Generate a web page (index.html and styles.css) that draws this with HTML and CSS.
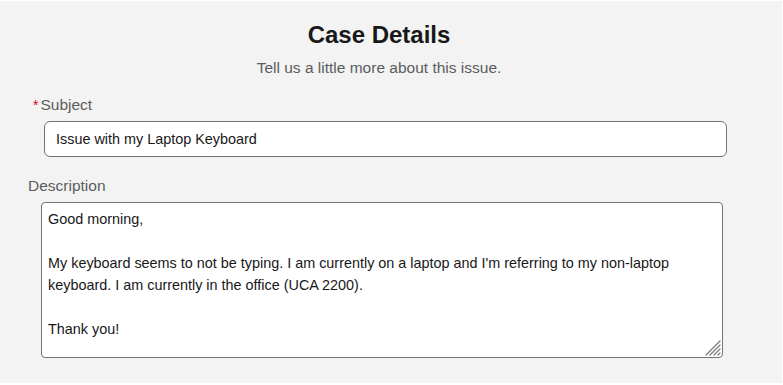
FILE: index.html
```html
<!DOCTYPE html>
<html lang="en">
<head>
  <meta charset="UTF-8">
  <title>Case Details</title>
  <link rel="stylesheet" href="styles.css">
</head>
<body>

<main class="panel">
  <header class="case-head">
    <h1 class="case-title">Case Details</h1>
    <p class="case-sub">Tell us a little more about this issue.</p>
  </header>

  <div class="field field-subject">
    <label class="field-label" for="subjectInput"><span class="req">*</span>Subject</label>
    <input class="subject-input" id="subjectInput" type="text" value="Issue with my Laptop Keyboard">
  </div>

  <div class="field field-desc">
    <label class="field-label" for="descInput">Description</label>
    <div class="desc-box">
      <textarea class="desc-input" id="descInput">Good morning,

My keyboard seems to not be typing. I am currently on a laptop and I'm referring to my non-laptop keyboard. I am currently in the office (UCA 2200).

Thank you!</textarea>
      <!-- resize grip -->
      <svg class="grip" width="16" height="16" viewBox="0 0 16 16">
        <g stroke="#7a7a7a" stroke-width="1.2" stroke-linecap="round">
          <line x1="1" y1="15" x2="15" y2="1"/>
          <line x1="5" y1="15" x2="15" y2="5"/>
          <line x1="9" y1="15" x2="15" y2="9"/>
          <line x1="13" y1="15" x2="15" y2="13"/>
        </g>
      </svg>
    </div>
  </div>
</main>

</body>
</html>
```

FILE: styles.css
```css
body {
  margin: 0;
  background: #fff;
  font-family: "Liberation Sans", Arial, sans-serif;
}

.panel {
  background: #f3f3f3;
  margin: 1px 1px 0 0;
  height: 382px;
  display: flex;
  flex-direction: column;
}

.case-head {
  text-align: center;
  padding: 20px 24px 0 0;
}

.case-title {
  margin: 0;
  font-size: 24px;
  line-height: 28px;
  font-weight: bold;
  color: #181818;
}

.case-sub {
  margin: 9px 0 0;
  font-size: 15.5px;
  line-height: 20px;
  color: #5c5c5c;
}

.field {
  display: flex;
  flex-direction: column;
  align-items: flex-start;
}

.field-label {
  font-size: 15.5px;
  line-height: 20px;
  color: #5c5c5c;
}

.field-subject {
  margin-top: 17px;
}

.field-subject .field-label {
  padding-left: 33px;
}

.req {
  color: #ea001e;
  font-size: 14px;
  margin-right: 2px;
}

.subject-input {
  box-sizing: border-box;
  margin: 6px 0 0 44px;
  width: 683px;
  height: 36px;
  padding: 0 11px;
  border: 1px solid #747474;
  border-radius: 6px;
  background: #fff;
  font-family: inherit;
  font-size: 14.4px;
  color: #181818;
}

.field-desc {
  margin-top: 19px;
}

.field-desc .field-label {
  padding-left: 28px;
}

.desc-box {
  position: relative;
  margin: 6px 0 0 41px;
  width: 682px;
  height: 156px;
}

.desc-input {
  box-sizing: border-box;
  display: block;
  width: 100%;
  height: 100%;
  margin: 0;
  padding: 5px 6px;
  border: 1px solid #747474;
  border-radius: 4px;
  background: #fff;
  font-family: inherit;
  font-size: 14.4px;
  line-height: 22px;
  color: #181818;
  resize: none;
}

.grip {
  position: absolute;
  right: 2px;
  bottom: 2px;
  pointer-events: none;
}
```
